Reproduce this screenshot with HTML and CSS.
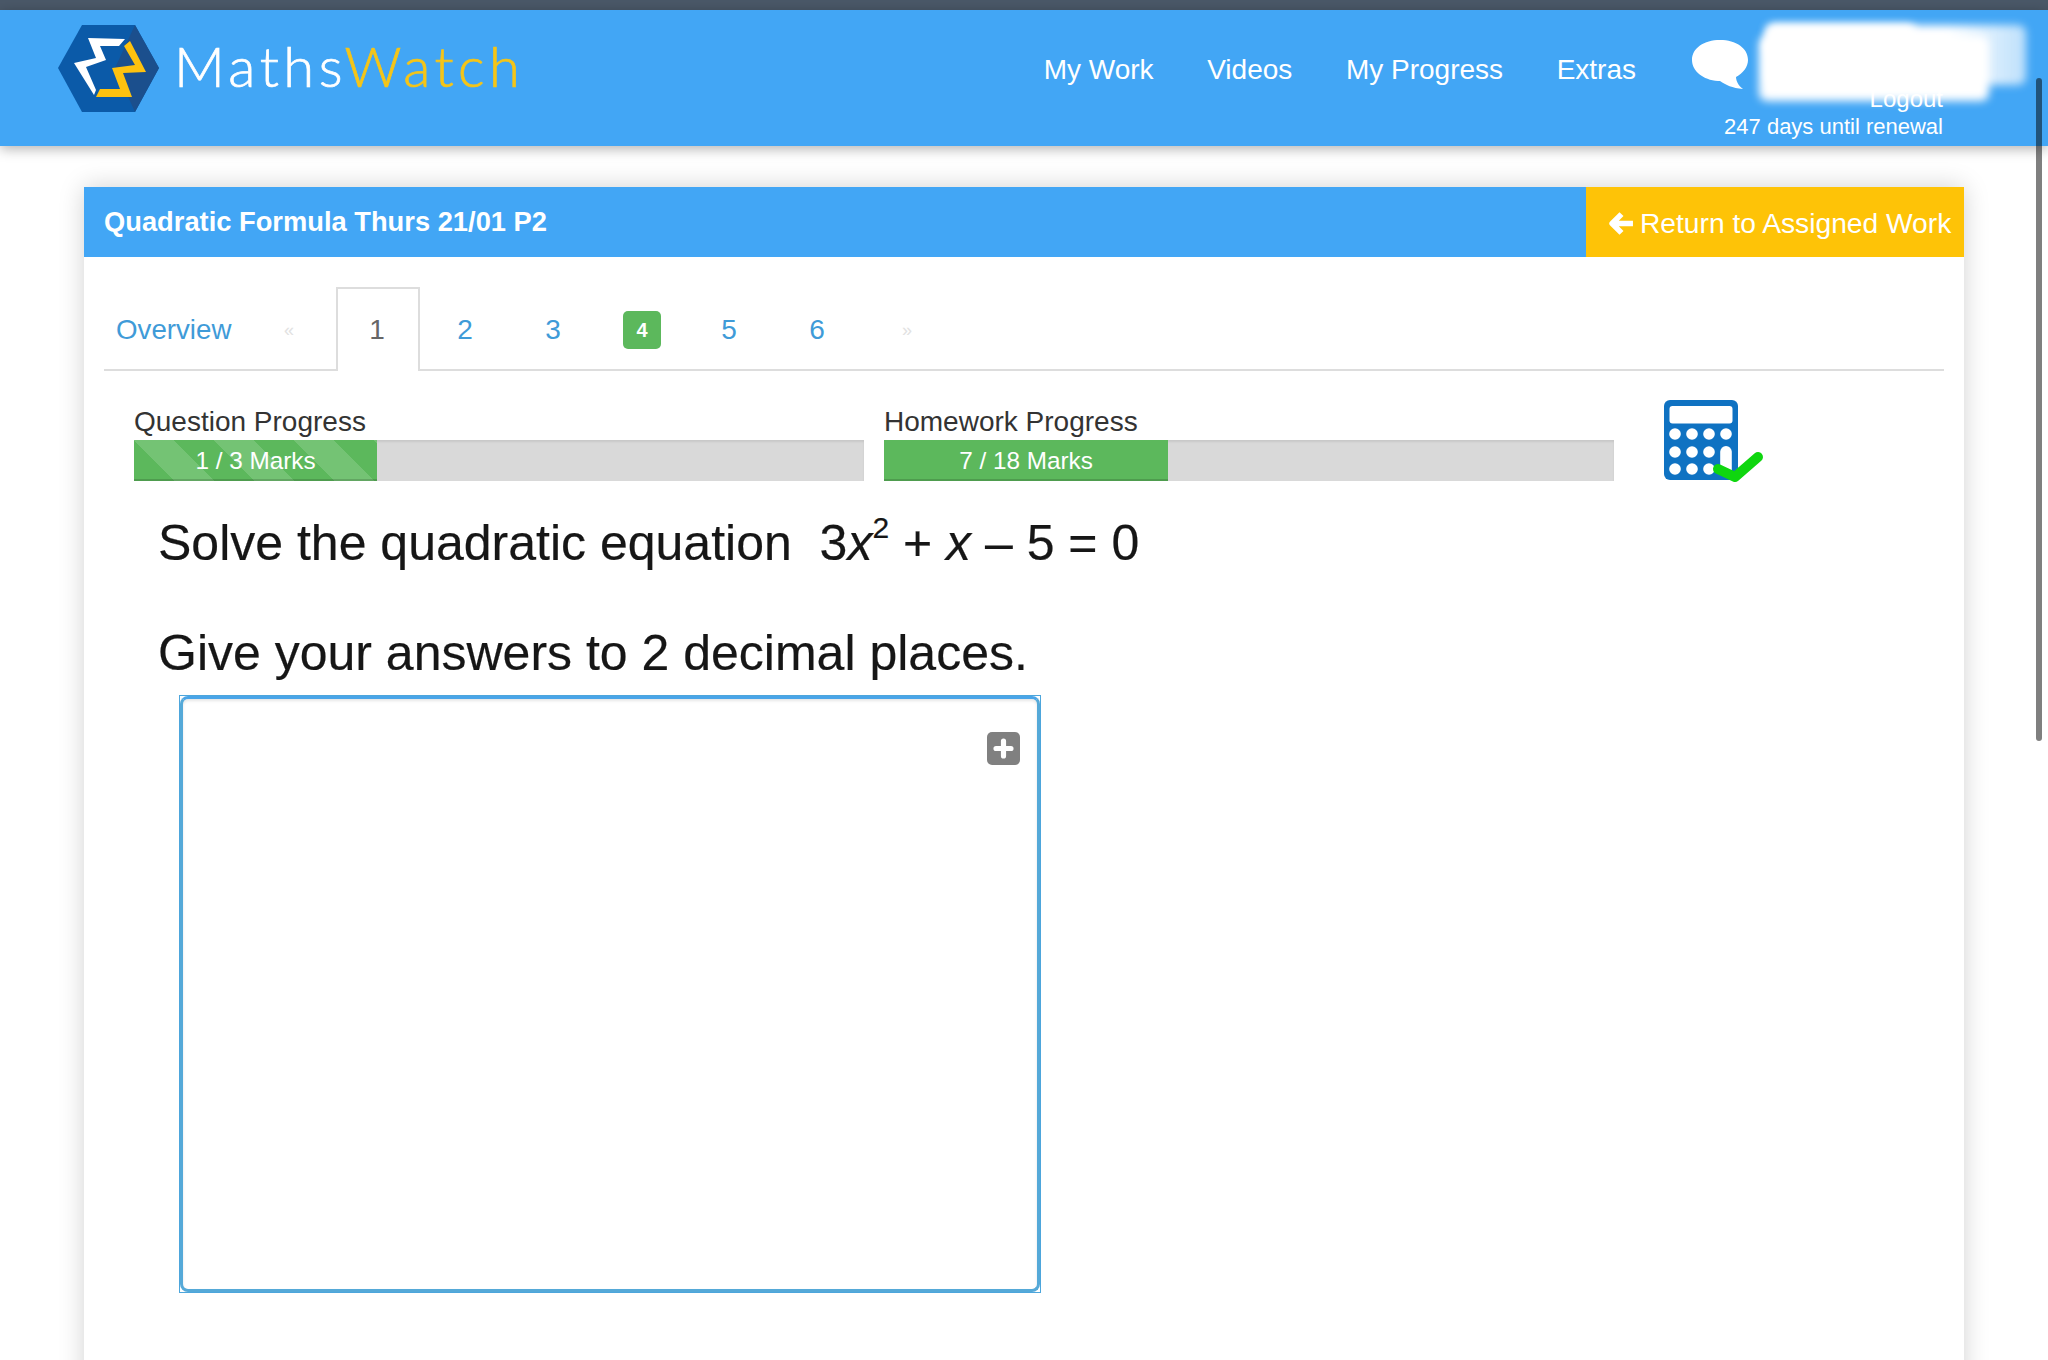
FILE: index.html
```html
<!DOCTYPE html>
<html lang="en">
<head>
<meta charset="utf-8">
<title>MathsWatch</title>
<link rel="stylesheet" href="styles.css">
</head>
<body>
<div class="topstrip"></div>
<header class="header">
  <div class="brand">
    <svg class="logo" viewBox="0 0 101 87" aria-hidden="true">
      <polygon points="0,43 24,0 77,0 101,43 77,87 24,87" fill="#0b5aa8"/>
      <polygon points="77,0 101,43 77,87 57,43" fill="#1b4f8d"/>
      <polygon points="30,13 67,14 61,21 42,21 48,35 28,42 38,65 36,70 16,38 38,33" fill="#fff"/>
      <polygon points="66,21 72,16 88,47 65,48 74,72 38,72 42,64 62,64 54,43 77,40" fill="#fec20f"/>
    </svg>
    <div class="wordmark">Maths<span class="wordmark-accent">Watch</span></div>
  </div>
  <nav class="nav">
    <a class="nav-link">My Work</a>
    <a class="nav-link">Videos</a>
    <a class="nav-link">My Progress</a>
    <a class="nav-link">Extras</a>
  </nav>
  <svg class="bubble" viewBox="0 0 56 49" aria-hidden="true">
    <path d="M28 0C12 0 0 8 0 20c0 11 11 20 26 21l2 0c6 4 12 7 23 8-3-2-7-7-7-12 7-4 12-10 12-17C56 8 44 0 28 0z" fill="#fff"/>
  </svg>
  <div class="account">
    <span class="logout">Logout</span>
    <span class="renewal">247 days until renewal</span>
  </div>
  <div class="blur blur-back"></div>
  <div class="blur blur-top"></div>
  <div class="blur blur-front"></div>
</header>

<main class="card">
  <div class="titlebar">
    <h1 class="title">Quadratic Formula Thurs 21/01 P2</h1>
    <a class="return">
      <svg class="return-arrow" viewBox="0 0 24 24" aria-hidden="true">
        <path d="M12 3 3 12l9 9M4 12h19" fill="none" stroke="#fff" stroke-width="5.4" stroke-linejoin="round"/>
      </svg>
      Return to Assigned Work
    </a>
  </div>

  <div class="card-body">
    <div class="tabs">
      <a class="tab-overview">Overview</a>
      <span class="tab-arrow tab-arrow-prev">«</span>
      <a class="tab tab-active">1</a>
      <a class="tab">2</a>
      <a class="tab">3</a>
      <a class="tab"><span class="badge">4</span></a>
      <a class="tab">5</a>
      <a class="tab">6</a>
      <span class="tab-arrow tab-arrow-next">»</span>
    </div>

    <div class="progress-row">
      <div class="progress-group">
        <div class="progress-label">Question Progress</div>
        <div class="progress">
          <div class="progress-bar progress-striped" style="width:33.3%">1 / 3 Marks</div>
        </div>
      </div>
      <div class="progress-group">
        <div class="progress-label">Homework Progress</div>
        <div class="progress">
          <div class="progress-bar" style="width:38.9%">7 / 18 Marks</div>
        </div>
      </div>
      <svg class="calc" viewBox="0 0 104 84" aria-hidden="true">
        <rect x="0" y="0" width="74" height="80" rx="6" fill="#0f72c2"/>
        <rect x="5.500" y="6" width="63" height="17.500" rx="3" fill="#fff"/>
        <g fill="#fff">
          <circle cx="11" cy="34" r="5.800"/><circle cx="28" cy="34" r="5.800"/><circle cx="45" cy="34" r="5.800"/><circle cx="62" cy="34" r="5.800"/>
          <circle cx="11" cy="52" r="5.800"/><circle cx="28" cy="52" r="5.800"/><circle cx="45" cy="52" r="5.800"/>
          <circle cx="11" cy="69" r="5.800"/><circle cx="28" cy="69" r="5.800"/><circle cx="45" cy="69" r="5.800"/>
          <rect x="56.200" y="46" width="11.600" height="29" rx="5.800"/>
        </g>
        <path d="M54 69l17 8 23-20" fill="none" stroke="#0fd60f" stroke-width="10" stroke-linecap="round" stroke-linejoin="round"/>
      </svg>
    </div>

    <div class="question">
      <p class="question-line">Solve the quadratic equation&nbsp; 3<i>x</i><sup class="power">2</sup> + <i>x</i> – 5 = 0</p>
      <p class="question-line question-line-second">Give your answers to 2 decimal places.</p>
    </div>

    <div class="answer">
      <div class="answer-inner">
        <button class="add" aria-label="Add">
          <svg viewBox="0 0 20 20" aria-hidden="true"><path d="M10 3.500v13M3.500 10h13" stroke="#fff" stroke-width="4.500" stroke-linecap="round"/></svg>
        </button>
      </div>
    </div>
  </div>
</main>
<div class="scrollbar"></div>
</body>
</html>
```

FILE: styles.css
```css
html, body {
  margin: 0;
  height: 1360px;
  overflow: hidden;
  background: #fff;
}
body {
  position: relative;
  font-family: "Liberation Sans", Arial, sans-serif;
  color: #333;
}
.topstrip {
  height: 10px;
  background: #4a5868;
}
.header {
  position: relative;
  height: 136px;
  display: flex;
  align-items: flex-start;
  background: #42a6f5;
  box-shadow: 0 3px 12px rgba(0, 0, 0, .3);
  color: #fff;
}
.brand {
  display: flex;
  align-items: flex-start;
  margin: 15px 0 0 58px;
}
.logo {
  width: 101px;
  height: 87px;
}
.wordmark {
  margin: 9px 0 0 15px;
  font-family: Lato, sans-serif;
  font-weight: 300;
  font-size: 56px;
  line-height: 64px;
  letter-spacing: 4.5px;
  -webkit-text-stroke: .7px currentColor;
}
.wordmark-accent {
  color: #f5c518;
}
.nav {
  display: flex;
  gap: 53.6px;
  margin: 44px 0 0 auto;
}
.nav-link {
  font-size: 28px;
  line-height: 32px;
}
.bubble {
  width: 56px;
  height: 49px;
  margin: 30px 0 0 56px;
}
.account {
  width: 195px;
  margin: 74px 105px 0 0;
  display: flex;
  flex-direction: column;
  align-items: flex-end;
  white-space: nowrap;
}
.logout {
  font-size: 24px;
  line-height: 29px;
}
.renewal {
  font-size: 22px;
  line-height: 28px;
}
.blur {
  position: absolute;
  background: #fff;
  filter: blur(4px);
}
.blur-back {
  left: 1766px;
  top: 15px;
  width: 260px;
  height: 60px;
  border-radius: 8px;
  background: linear-gradient(90deg, #fff 70%, rgba(255, 255, 255, .65) 100%);
}
.blur-top {
  left: 1766px;
  top: 14px;
  width: 150px;
  height: 30px;
  border-radius: 8px;
}
.blur-front {
  left: 1759px;
  top: 26px;
  width: 230px;
  height: 65px;
  border-radius: 8px;
}
.card {
  width: 1880px;
  height: 1300px;
  margin: 41px 0 0 84px;
  background: #fff;
  box-shadow: 0 0 24px rgba(0, 0, 0, .18);
}
.titlebar {
  height: 70px;
  display: flex;
  justify-content: space-between;
  background: #42a6f5;
}
.title {
  margin: 0;
  padding-left: 20px;
  font-size: 27.3px;
  font-weight: 700;
  line-height: 70px;
  color: #fff;
}
.return {
  width: 378px;
  box-sizing: border-box;
  padding: 2px 0 0 23px;
  display: flex;
  align-items: center;
  gap: 6px;
  background: #fec307;
  color: #fff;
  font-size: 28.2px;
  white-space: nowrap;
}
.return-arrow {
  width: 25px;
  height: 25px;
  flex: none;
}
.card-body {
  padding: 30px 20px 0;
}
.tabs {
  display: flex;
  align-items: stretch;
  height: 84px;
  box-sizing: border-box;
  border-bottom: 2px solid #ddd;
  font-size: 28px;
  color: #3f9bd8;
}
.tab-overview {
  width: 232px;
  padding: 27px 0 0 12px;
  box-sizing: border-box;
  font-size: 27.7px;
  line-height: 32px;
}
.tab-arrow {
  font-size: 18px;
  color: #e2e2e2;
  line-height: 32px;
  padding-top: 27px;
  width: 0;
  white-space: nowrap;
}
.tab-arrow-prev {
  margin-left: -52px;
  margin-right: 52px;
}
.tab-arrow-next {
  margin-left: 38px;
}
.tab {
  width: 84px;
  height: 84px;
  box-sizing: border-box;
  margin: 0 4px 0 0;
  padding: 25px 2px 0 0;
  text-align: center;
  line-height: 32px;
  border: 2px solid transparent;
  border-bottom: 0;
}
.tab-active {
  color: #666;
  background: #fff;
  border-color: #ddd;
}
.badge {
  display: block;
  width: 38px;
  height: 38px;
  margin: -3px auto 0;
  position: relative;
  left: 1px;
  border-radius: 5px;
  background: #5cb85c;
  color: #fff;
  font-size: 20px;
  font-weight: 700;
  line-height: 38px;
}
.progress-row {
  display: flex;
  align-items: flex-start;
  padding: 33px 0 0 30px;
  gap: 20px;
}
.progress-group {
  width: 730px;
}
.progress-label {
  font-size: 28px;
  line-height: 36px;
  color: #333;
}
.progress {
  height: 41px;
  background: #d9d9d9;
  box-shadow: inset 0 2px 2px rgba(0, 0, 0, .08);
}
.progress-bar {
  height: 100%;
  background-color: #5cb85c;
  box-shadow: inset 0 -2px 0 rgba(0, 0, 0, .15);
  color: #fff;
  font-size: 24.3px;
  line-height: 41px;
  text-align: center;
}
.progress-striped {
  background-image: linear-gradient(45deg,
    rgba(255, 255, 255, .15) 25%, transparent 25%,
    transparent 50%, rgba(255, 255, 255, .15) 50%,
    rgba(255, 255, 255, .15) 75%, transparent 75%);
  background-size: 80px 80px;
}
.calc {
  width: 104px;
  height: 84px;
  margin: -4px 0 0 30px;
}
.question {
  padding: 29px 0 0 54px;
  color: #161616;
  font-size: 50px;
  line-height: 60px;
  -webkit-text-stroke: .2px #161616;
}
.question-line {
  margin: 0;
  white-space: nowrap;
}
.question-line-second {
  margin-top: 50px;
}
.power {
  font-size: 30px;
  line-height: 0;
  vertical-align: 22px;
  margin-left: 0;
}
.answer {
  width: 862px;
  height: 598px;
  box-sizing: border-box;
  margin: 12px 0 0 75px;
  border: 1px solid #4da6dc;
}
.answer-inner {
  position: relative;
  height: 100%;
  box-sizing: border-box;
  border: 3px solid #55a9d8;
  border-top-color: #4aa5e8;
  border-radius: 8px;
  box-shadow: inset 0 2px 3px rgba(0, 0, 0, .1);
}
.add {
  position: absolute;
  right: 17px;
  top: 33px;
  width: 33px;
  height: 33px;
  padding: 5px;
  border: 0;
  border-radius: 5px;
  background: #808080;
}
.add svg {
  display: block;
  width: 100%;
  height: 100%;
}
.scrollbar {
  position: absolute;
  left: 2036px;
  top: 78px;
  width: 6px;
  height: 663px;
  border-radius: 3px;
  background: rgba(0, 0, 0, .5);
}
```
